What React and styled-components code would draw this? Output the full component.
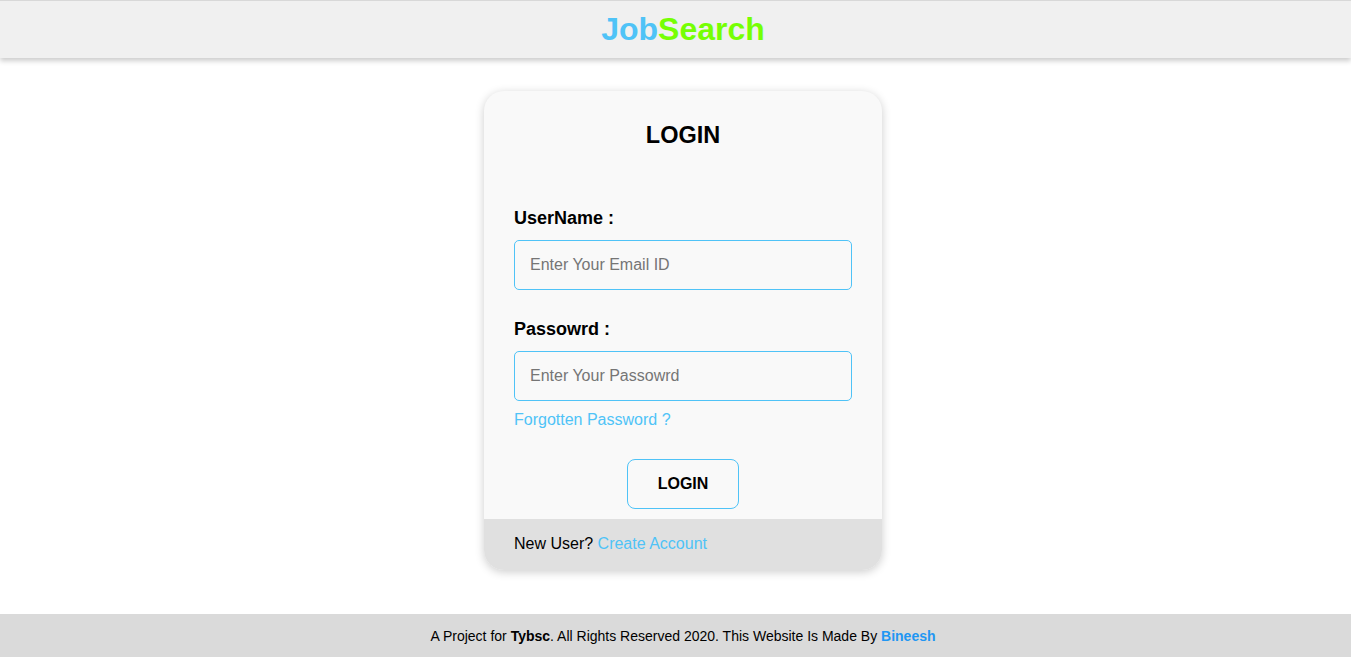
import React from 'react'
import styled, {createGlobalStyle} from 'styled-components'

const GlobalStyle = createGlobalStyle`
    body{
        margin:0;
        font-family: "Liberation Sans", Arial, sans-serif;
        background:#fff;
    }
    *{
        box-sizing:border-box;
    }
`

const Login = () => {
  return (
    <>
    <GlobalStyle/>
    <Page>
        <Header>
            <Logo><span className="job">Job</span><span className="search">Search</span></Logo>
        </Header>

        <Main>
            <Card>
                <CardBody>
                    <Title>LOGIN</Title>
                    <Field top="60px">
                        <Label>UserName :</Label>
                        <Input type="text" placeholder="Enter Your Email ID"/>
                    </Field>
                    <Field top="29px">
                        <Label>Passowrd :</Label>
                        <Input type="password" placeholder="Enter Your Passowrd"/>
                    </Field>
                    <Forgot href="#">Forgotten Password ?</Forgot>
                    <ButtonRow>
                        <LoginButton>LOGIN</LoginButton>
                    </ButtonRow>
                </CardBody>
                <CardFooter>
                    New User? <a href="#">Create Account</a>
                </CardFooter>
            </Card>
        </Main>

        <Footer>
            A Project for <b>Tybsc</b>. All Rights Reserved 2020. This Website Is Made By <span>Bineesh</span>
        </Footer>
    </Page>
    </>
  )
}

// the layout is centred as if the window were 15px wider (room for a scrollbar)
const Page = styled.div`
    display:flex;
    flex-direction:column;
    min-height:100vh;

    & > *{
        padding-left:15px;
    }
`

const Header = styled.header`
    height:58px;
    background-color:#f0f0f0;
    border-top:1px solid #d8d8d8;
    box-shadow: 0 3px 5px rgba(0,0,0,0.2);
    display:flex;
    justify-content:center;
    align-items:center;
    position:relative;
    z-index:2;
`

const Logo = styled.h1`
    margin:0;
    font-size:32px;
    font-weight:bold;
    line-height:1;
    padding-bottom:1px;

    .job{
        color:#4fc3f7;
    }
    .search{
        color:#76ff03;
    }
`

const Main = styled.main`
    flex:1;
    display:flex;
    justify-content:center;
    align-items:flex-start;
    padding-top:33px;
`

const Card = styled.div`
    width:398px;
    border-radius:20px;
    overflow:hidden;
    background-color:#f9f9f9;
    box-shadow: 0 2px 10px rgba(0,0,0,0.2);
`

const CardBody = styled.div`
    padding:31px 30px 10px;
    display:flex;
    flex-direction:column;
`

const Title = styled.h2`
    margin:0;
    text-align:center;
    font-size:23.5px;
    font-weight:bold;
    line-height:26px;
    color:#000;
`

const Field = styled.div`
    display:flex;
    flex-direction:column;
    margin-top:${p => p.top};
`

const Label = styled.label`
    font-size:18px;
    font-weight:bold;
    line-height:21px;
    color:#000;
    margin-bottom:11px;
`

const Input = styled.input`
    height:50px;
    width:100%;
    border:1px solid #4fc3f7;
    border-radius:5px;
    background:#f9f9f9;
    padding:0 15px;
    font-size:16px;
    font-family:"Liberation Sans", Arial, sans-serif;
    outline:none;

    &::placeholder{
        color:#757575;
    }
`

const Forgot = styled.a`
    margin-top:9px;
    font-size:16px;
    line-height:19px;
    color:#4fc3f7;
    text-decoration:none;
    align-self:flex-start;
`

const ButtonRow = styled.div`
    display:flex;
    justify-content:center;
    margin-top:30px;
`

const LoginButton = styled.button`
    width:112px;
    height:50px;
    border:1px solid #4fc3f7;
    border-radius:8px;
    background:#f9f9f9;
    font-size:16px;
    font-weight:bold;
    font-family:"Liberation Sans", Arial, sans-serif;
    color:#000;
    cursor:pointer;
`

const CardFooter = styled.div`
    height:51px;
    background-color:#e0e0e0;
    padding:0 30px 2px;
    display:flex;
    align-items:center;
    font-size:16px;
    color:#000;
    white-space:pre;

    a{
        color:#4fc3f7;
        text-decoration:none;
    }
`

const Footer = styled.footer`
    height:43px;
    background-color:#dadada;
    display:flex;
    justify-content:center;
    align-items:center;
    font-size:14px;
    color:#000;
    white-space:pre;

    span{
        color:#2196f3;
        font-weight:bold;
    }
`

export default Login
